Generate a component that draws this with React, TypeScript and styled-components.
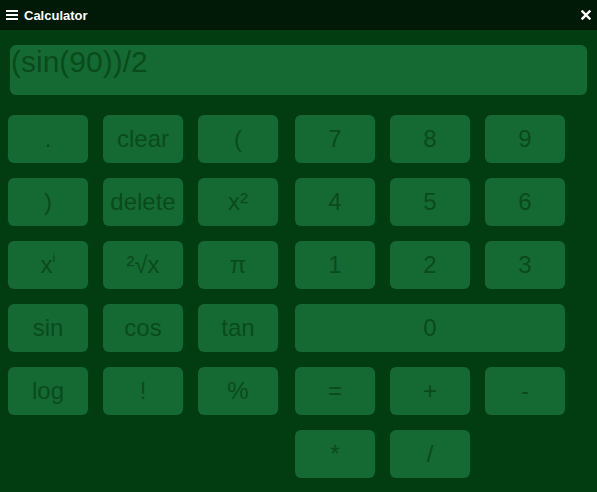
import React from "react";
import styled, { createGlobalStyle } from "styled-components";

const Global = createGlobalStyle`
  html, body { margin: 0; padding: 0; background: #013d11; }
  body { font-family: "Liberation Sans", Arial, sans-serif; }
`;

const Page = styled.div`
  width: 597px;
  height: 492px;
  background: #013d11;
  overflow: hidden;
`;

const TitleBar = styled.div`
  height: 30px;
  background: #001a07;
  display: flex;
  align-items: center;
  padding: 0 6px 0 6px;
  box-sizing: border-box;
`;

const Title = styled.div`
  color: #ffffff;
  font-weight: bold;
  font-size: 13px;
  margin-left: 6px;
  flex: 1;
`;

const Main = styled.div`
  padding: 15px 10px 0 8px;
`;

const Display = styled.div`
  margin-left: 2px;
  height: 50px;
  background: #156a33;
  border-radius: 6px;
  color: #0a4a1c;
  font-size: 30px;
  line-height: 34px;
  padding: 0 0 0 1px;
  box-sizing: border-box;
`;

const Keys = styled.div`
  display: flex;
  gap: 17px;
  margin-top: 20px;
`;

const Grid = styled.div`
  display: grid;
  grid-template-columns: repeat(3, 80px);
  grid-auto-rows: 48px;
  gap: 15px;
  align-content: start;
`;

const Key = styled.button<{ $span?: number }>`
  grid-column: span ${(p) => p.$span ?? 1};
  border: none;
  margin: 0;
  padding: 0;
  background: #156a33;
  border-radius: 6px;
  color: #0a4a1c;
  font-family: "Liberation Sans", Arial, sans-serif;
  font-size: 24px;
  display: flex;
  align-items: center;
  justify-content: center;
`;

const Sup = styled.sup`
  font-size: 13px;
  vertical-align: 0;
  position: relative;
  top: -8px;
`;

const left: React.ReactNode[] = [
  ".", "clear", "(",
  ")", "delete", "x²",
  <>x<Sup>i</Sup></>, "²√x", "π",
  "sin", "cos", "tan",
  "log", "!", "%",
];

const right: { label: string; span?: number }[] = [
  { label: "7" }, { label: "8" }, { label: "9" },
  { label: "4" }, { label: "5" }, { label: "6" },
  { label: "1" }, { label: "2" }, { label: "3" },
  { label: "0", span: 3 },
  { label: "=" }, { label: "+" }, { label: "-" },
  { label: "*" }, { label: "/" },
];

export default function App() {
  return (
    <Page>
      <Global />
      <TitleBar>
        <svg width="12" height="10" viewBox="0 0 12 10">
          <rect x="0" y="0" width="12" height="2" fill="#fff" />
          <rect x="0" y="4" width="12" height="2" fill="#fff" />
          <rect x="0" y="8" width="12" height="2" fill="#fff" />
        </svg>
        <Title>Calculator</Title>
        <svg width="10" height="10" viewBox="0 0 10 10">
          <path d="M1.5 1.5 L8.5 8.5 M8.5 1.5 L1.5 8.5" stroke="#fff" strokeWidth="2.4" strokeLinecap="square" />
        </svg>
      </TitleBar>
      <Main>
        <Display>(sin(90))/2</Display>
        <Keys>
          <Grid>
            {left.map((l, i) => (
              <Key key={i}>{l}</Key>
            ))}
          </Grid>
          <Grid>
            {right.map((k, i) => (
              <Key key={i} $span={k.span}>{k.label}</Key>
            ))}
          </Grid>
        </Keys>
      </Main>
    </Page>
  );
}
